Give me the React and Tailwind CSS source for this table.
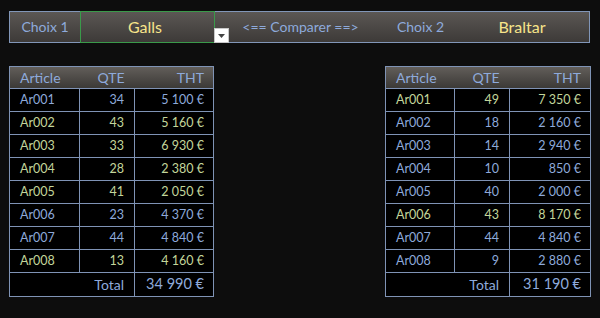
import React from "react";

const left = [
  ["Ar001", 34, "5 100 €", "b"],
  ["Ar002", 43, "5 160 €", "g"],
  ["Ar003", 33, "6 930 €", "g"],
  ["Ar004", 28, "2 380 €", "g"],
  ["Ar005", 41, "2 050 €", "g"],
  ["Ar006", 23, "4 370 €", "b"],
  ["Ar007", 44, "4 840 €", "b"],
  ["Ar008", 13, "4 160 €", "g"],
];

const right = [
  ["Ar001", 49, "7 350 €", "g"],
  ["Ar002", 18, "2 160 €", "b"],
  ["Ar003", 14, "2 940 €", "b"],
  ["Ar004", 10, "850 €", "b"],
  ["Ar005", 40, "2 000 €", "b"],
  ["Ar006", 43, "8 170 €", "g"],
  ["Ar007", 44, "4 840 €", "b"],
  ["Ar008", 9, "2 880 €", "b"],
];

function Tableau({ rows, total, widths }) {
  return (
    <table className="border-collapse bg-black text-[12.5px] leading-none">
      <colgroup>
        {widths.map((w, i) => (
          <col key={i} style={{ width: w }} />
        ))}
      </colgroup>
      <thead>
        <tr className="h-[22px] bg-gradient-to-b from-[#625e5a] to-[#3a3835] text-[#8eaadb] text-[14px]">
          <th className="border border-[#7f93b5] border-r-0 text-left font-normal pl-[10px]">Article</th>
          <th className="border-y border-[#7f93b5] text-right font-normal pr-[10px]">QTE</th>
          <th className="border border-[#7f93b5] border-l-0 text-right font-normal pr-[9px]">THT</th>
        </tr>
      </thead>
      <tbody>
        {rows.map(([a, q, t, c]) => {
          const col = c === "g" ? "text-[#c3d69b]" : "text-[#8eaadb]";
          return (
            <tr key={a} className={`h-[23px] ${col}`}>
              <td className="border border-[#7f93b5] pl-[10px] pt-px">{a}</td>
              <td className="border border-[#7f93b5] text-right pr-[10px] pt-px">{q}</td>
              <td className="border border-[#7f93b5] text-right pr-[9px] pt-px">{t}</td>
            </tr>
          );
        })}
        <tr className="h-[24px] text-[#8eaadb]">
          <td colSpan={2} className="border border-[#7f93b5] text-right pr-[10px] text-[14px]">
            Total
          </td>
          <td className="border border-[#7f93b5] text-right pr-[9px] text-[14.5px]">{total}</td>
        </tr>
      </tbody>
    </table>
  );
}

export default function App() {
  return (
    <div
      className="w-[600px] h-[318px] bg-[#0d0d0d] pt-[11px] px-[9px]"
      style={{ fontFamily: "Lato, 'Open Sans', sans-serif" }}
    >
      <div className="relative flex h-[32px] w-[581px] border border-[#8196b8] bg-gradient-to-b from-[#5b5754] to-[#3d3a38] text-[14px] leading-none">
        <div className="w-[70px] flex items-center justify-center text-[#8eaadb]">Choix 1</div>
        <div className="w-[135px] -my-px flex items-center justify-center border border-[#3a9a4a] text-[#f7e48a] text-[16px] pr-[5px]">
          Galls
        </div>
        <div className="w-[171px] flex items-center justify-center text-[#8eaadb]">&lt;== Comparer ==&gt;</div>
        <div className="w-[69px] flex items-center justify-center text-[#8eaadb]">Choix 2</div>
        <div className="flex-1 flex items-center justify-center text-[#f7e48a] text-[16px]">Braltar</div>
        <div className="absolute left-[204px] top-[16px] w-[15px] h-[15px] bg-white border border-[#c8c8c8] flex items-center justify-center">
          <svg width="7" height="4" viewBox="0 0 7 4">
            <path d="M0 0 L7 0 L3.5 4 Z" fill="#444" />
          </svg>
        </div>
      </div>
      <div className="flex justify-between mt-[23px]">
        <Tableau rows={left} total="34 990 €" widths={[70, 55, 79]} />
        <Tableau rows={right} total="31 190 €" widths={[69, 55, 81]} />
      </div>
    </div>
  );
}
